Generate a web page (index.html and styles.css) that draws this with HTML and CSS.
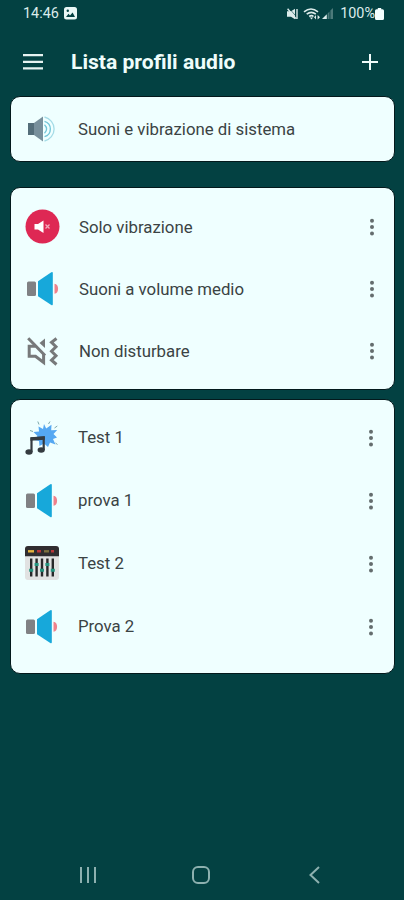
FILE: index.html
```html
<!DOCTYPE html>
<html lang="it">
<head>
  <meta charset="UTF-8" />
  <meta name="viewport" content="width=device-width, initial-scale=1.0" />
  <title>Lista profili audio</title>
  <link rel="stylesheet" href="styles.css">
</head>
<body>
  <!-- shared icons -->
  <svg class="sprite" aria-hidden="true">
    <symbol id="speaker" viewBox="0 0 34 34">
      <rect x="1" y="9.5" width="9" height="14.5" rx="1.5" fill="#808184" />
      <path d="M12 9.2 25.3 .2Q26.8 -.6 26.8 1V32.2Q26.8 33.8 25.3 33L12 24.2Z" fill="#17a8da" />
      <path d="M28.5 11.7C33.3 11.7 33.3 21.7 28.5 21.7Z" fill="#f0828c" />
    </symbol>
    <symbol id="dots" viewBox="0 0 6 18">
      <circle cx="3" cy="2.7" r="2" />
      <circle cx="3" cy="9.1" r="2" />
      <circle cx="3" cy="15.5" r="2" />
    </symbol>
  </svg>

  <div class="status-bar">
    <div class="status-left">
      <span>14:46</span>
      <svg class="picture-icon" viewBox="0 0 13 13">
        <rect width="13" height="12.5" rx="2.5" fill="#e9f7f6" />
        <path d="M2 10 4.5 6.8 6 8.5 8.6 5.5 11 10Z" fill="#034142" />
        <circle cx="3.8" cy="3.7" r="1.2" fill="#034142" />
      </svg>
    </div>
    <div class="status-right">
      <svg class="mute-icon" viewBox="0 0 12 12">
        <path d="M0 3.3H4L8 .8V11.2L4 8.7H0Z" fill="#dceceb" />
        <path d="M2.6 .8 10 9.4" stroke="#034142" stroke-width=".6" />
        <path d="M.6 .8 9 10.6M10 1V11" fill="none" stroke="#dceceb" stroke-width="1.4" />
      </svg>
      <svg class="wifi-icon" viewBox="0 0 17 12">
        <path d="M0 3.8Q7-1.7 14 3.8M2.7 6.2Q7.3 2.5 11.8 6.2M5.2 8.5Q7.5 6.8 9.5 8.5" fill="none" stroke="#dceceb" stroke-width="1.6" />
        <path d="M7.5 11.5 5.8 9.4H9.2ZM10 9.2 12 7V11.4ZM16 9.2 13.6 7V11.4Z" fill="#dceceb" />
      </svg>
      <svg class="signal-icon" viewBox="0 0 11 11">
        <path d="M0 11 4.8 6.2V11Z" fill="#dceceb" />
        <path d="M5.6 5.4 7.5 3.5V11H5.6ZM8.4 2.6 11 0V11H8.4Z" fill="#4c7a7a" />
      </svg>
      <span>100%</span>
      <svg class="battery-icon" viewBox="0 0 9 12">
        <path d="M2.8 0H6.2V1.2H7.5Q9 1.2 9 2.7V10.5Q9 12 7.5 12H1.5Q0 12 0 10.5V2.7Q0 1.2 1.5 1.2H2.8Z" fill="#f4ffff" />
      </svg>
    </div>
  </div>

  <header class="top-bar">
    <svg class="menu-icon" viewBox="0 0 20 16">
      <path d="M0 1.2H20M0 7.8H20M0 14.4H20" stroke="#e6f3f1" stroke-width="2.2" />
    </svg>
    <h1>Lista profili audio</h1>
    <svg class="add-icon" viewBox="0 0 16 16">
      <path d="M8 0V16M0 8H16" stroke="#f0fbfa" stroke-width="2" />
    </svg>
  </header>

  <main>
    <section class="card card-system">
      <div class="row">
        <svg class="row-icon" viewBox="0 0 34 34">
          <path d="M3 11H10V23H3Z" fill="#546e7a" />
          <path d="M9 11 18 4.5V29.5L9 23Z" fill="#78909c" />
          <g fill="none" stroke="#71c5d8" stroke-width="1.3">
            <path d="M19.5 12.8Q23.7 17 19.5 21.2" />
            <path d="M19.5 9.3A8 8 0 0 1 19.5 24.7" />
            <path d="M19.5 5A12.3 12.3 0 0 1 19.5 29" stroke="#a5dce7" />
          </g>
        </svg>
        <span class="name">Suoni e vibrazione di sistema</span>
      </div>
    </section>

    <section class="card card-default">
      <div class="row">
        <svg class="row-icon" viewBox="0 0 34 34">
          <circle cx="17.5" cy="16.5" r="17" fill="#de2854" />
          <path d="M9.5 14H13L18.5 10.5V23L13 19.5H9.5Z" fill="#fff" />
          <path d="M20.5 14.5 24.5 18.5M24.5 14.5 20.5 18.5" stroke="#f3a9bb" stroke-width="1.3" />
        </svg>
        <span class="name">Solo vibrazione</span>
        <svg class="more"><use href="#dots" /></svg>
      </div>
      <div class="row">
        <svg class="row-icon nudged"><use href="#speaker" /></svg>
        <span class="name">Suoni a volume medio</span>
        <svg class="more"><use href="#dots" /></svg>
      </div>
      <div class="row">
        <svg class="row-icon" viewBox="0 0 34 34">
          <g fill="none" stroke="#77797a" stroke-width="3">
            <path d="M3.2 4.2 20 21.5" />
            <path d="M10.5 12.2H4.2V22.2H10.5L18.6 28.5V20" />
            <path d="M31.5 4.5 26.5 8.3 31 12.8 26.5 17.3 31 21.8 26.5 26.2 31.5 30.5" />
          </g>
          <path d="M20 4.5V14L14.5 9Z" fill="#77797a" />
        </svg>
        <span class="name">Non disturbare</span>
        <svg class="more"><use href="#dots" /></svg>
      </div>
    </section>

    <section class="card card-custom">
      <div class="row">
        <svg class="row-icon" viewBox="0 0 34 34">
          <path d="M19 3 21.2 7.5 26.5 3.8 26.2 9.2 32.2 9 28.5 13 32 16.5 28 18 30.5 23.5 25 21.5 23 26 19 22.5 14.5 25 14 20 9 19 12.5 15 8.5 11 14 10.5 13.5 5.5 18 8Z" fill="#55a8f2" />
          <path d="M14 3.5 12.8 .5M23.5 3 25 .5M29.5 7 32.3 5M30.5 22 32.5 23.5M8 10.5 5 9.5" stroke="#7fa9ab" stroke-width="1" />
          <path d="M6.5 31V17.5L18.7 16.5V29" fill="none" stroke="#343b40" stroke-width="2.2" />
          <path d="M5.4 16.3 19.8 15.2V18.8L5.4 19.8Z" fill="#343b40" />
          <ellipse cx="4" cy="31" rx="3.6" ry="2.8" fill="#343b40" />
          <ellipse cx="16.2" cy="29" rx="3.6" ry="2.8" fill="#343b40" />
        </svg>
        <span class="name">Test 1</span>
        <svg class="more"><use href="#dots" /></svg>
      </div>
      <div class="row">
        <svg class="row-icon"><use href="#speaker" /></svg>
        <span class="name">prova 1</span>
        <svg class="more"><use href="#dots" /></svg>
      </div>
      <div class="row">
        <svg class="row-icon" viewBox="0 0 34 34">
          <rect y="-1" width="34" height="34" rx="3" fill="#e1e2e2" />
          <path d="M0 9.3V2Q0-1 3-1H31Q34-1 34 2V9.3Z" fill="#302d30" />
          <path d="M3 4.3H9" stroke="#e6b43e" stroke-width="2.4" />
          <path d="M12 4.3H16M26 4.3H29" stroke="#b93539" stroke-width="2.4" />
          <path d="M19 4.3H24" stroke="#7e7140" stroke-width="2.4" />
          <path d="M6.2 11.5V29.5M11.6 11.5V29.5M17 11.5V29.5M22.4 11.5V29.5M27.8 11.5V29.5" stroke="#28282a" stroke-width="2.4" />
          <path d="M4.2 23.2H8.2M9.6 17.5H13.6M15 23.2H19M20.4 17.5H24.4M25.8 23.2H29.8" stroke="#23947f" stroke-width="3" />
        </svg>
        <span class="name">Test 2</span>
        <svg class="more"><use href="#dots" /></svg>
      </div>
      <div class="row">
        <svg class="row-icon"><use href="#speaker" /></svg>
        <span class="name">Prova 2</span>
        <svg class="more"><use href="#dots" /></svg>
      </div>
    </section>
  </main>

  <nav class="nav-bar">
    <svg viewBox="0 0 20 20">
      <path d="M3 2V18M10 2V18M17 2V18" />
    </svg>
    <svg viewBox="0 0 20 20">
      <rect x="2" y="2" width="16" height="16" rx="5" />
    </svg>
    <svg viewBox="0 0 20 20">
      <path d="M15 2 6.5 10 15 18" />
    </svg>
  </nav>
</body>
</html>
```

FILE: styles.css
```css
* {
  box-sizing: border-box;
}

body {
  margin: 0;
  height: 900px;
  display: flex;
  flex-direction: column;
  background: #034142;
  color: #3b4344;
  font-family: Roboto, "Noto Sans", sans-serif;
  overflow: hidden;
}

svg {
  display: block;
  flex-shrink: 0;
  overflow: visible;
}

symbol {
  overflow: visible;
}

.sprite {
  display: none;
}

.status-bar {
  height: 28px;
  padding: 0 20px 1px 23px;
  display: flex;
  align-items: center;
  justify-content: space-between;
  color: #dceceb;
  font-size: 14.4px;
}

.status-left,
.status-right {
  display: flex;
  align-items: center;
}

.picture-icon {
  width: 13px;
  height: 13px;
  margin-left: 5px;
}

.mute-icon {
  width: 12px;
  height: 12px;
}

.wifi-icon {
  width: 17px;
  height: 12px;
  margin-left: 5px;
}

.signal-icon {
  width: 11px;
  height: 11px;
  margin: 0 7px 0 1px;
}

.battery-icon {
  width: 9px;
  height: 12px;
}

.top-bar {
  height: 68px;
  padding: 0 26px 0 23px;
  display: flex;
  align-items: center;
}

.menu-icon {
  width: 20px;
  height: 16px;
}

h1 {
  flex: 1;
  margin: 0 0 0 28px;
  padding-bottom: 2px;
  font-size: 21.1px;
  font-weight: 700;
  color: #effdfb;
}

.add-icon {
  width: 16px;
  height: 16px;
}

main {
  flex: 1;
  padding: 0 9px 0 10px;
}

.card {
  background: #efffff;
  border: 1px solid #03191c;
  border-radius: 10px;
}

.card-system {
  height: 66px;
  margin-bottom: 25px;
  padding-top: 1px;
}

.card-default {
  height: 203px;
  margin-bottom: 9px;
  padding-top: 8px;
}

.card-custom {
  height: 275px;
  padding-top: 6px;
}

.row {
  height: 62px;
  padding: 0 19px 0 14px;
  display: flex;
  align-items: center;
}

.card-custom .row {
  height: 63px;
  padding-right: 20px;
}

.row-icon {
  width: 34px;
  height: 34px;
}

.nudged {
  transform: translateX(1px);
}

.name {
  flex: 1;
  margin-left: 19px;
  font-size: 16.8px;
}

.card-default .name {
  margin-left: 20px;
}

.card-custom .name {
  padding-bottom: 2px;
}

.more {
  width: 6px;
  height: 18px;
  fill: #646d6e;
}

.nav-bar {
  height: 51px;
  padding: 0 80px 0 78px;
  display: flex;
  align-items: center;
  justify-content: space-between;
}

.nav-bar svg {
  width: 20px;
  height: 20px;
  fill: none;
  stroke: #8db0af;
  stroke-width: 2;
}
```
